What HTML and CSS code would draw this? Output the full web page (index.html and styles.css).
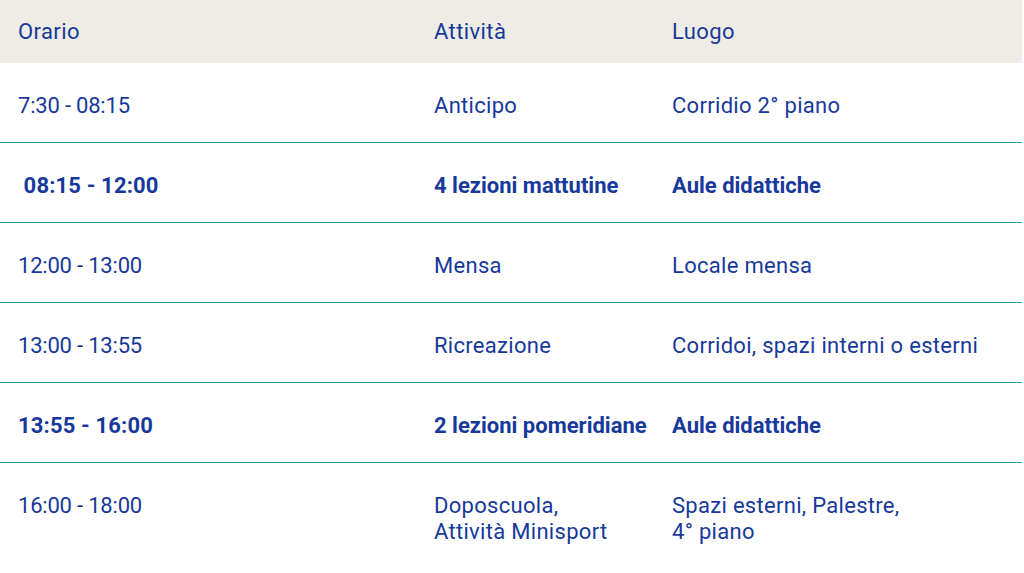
FILE: index.html
```html
<!DOCTYPE html>
<html lang="it">
<head>
<meta charset="utf-8">
<title>Orario</title>
<link rel="stylesheet" href="styles.css">
</head>
<body>
<table class="schedule">
  <colgroup>
    <col class="c-time">
    <col class="c-act">
    <col class="c-place">
  </colgroup>
  <thead>
    <tr><th>Orario</th><th>Attività</th><th>Luogo</th></tr>
  </thead>
  <tbody>
    <tr><td class="time">7:30 - 08:15</td><td>Anticipo</td><td>Corridio 2° piano</td></tr>
    <tr class="strong"><td class="time">&nbsp;08:15 - 12:00</td><td>4 lezioni mattutine</td><td>Aule didattiche</td></tr>
    <tr><td class="time">12:00 - 13:00</td><td>Mensa</td><td>Locale mensa</td></tr>
    <tr><td class="time">13:00 - 13:55</td><td>Ricreazione</td><td>Corridoi, spazi interni o esterni</td></tr>
    <tr class="strong"><td class="time">13:55 - 16:00</td><td>2 lezioni pomeridiane</td><td>Aule didattiche</td></tr>
    <tr><td class="time">16:00 - 18:00</td><td>Doposcuola,<br>Attività Minisport</td><td>Spazi esterni, Palestre,<br>4° piano</td></tr>
  </tbody>
</table>
</body>
</html>
```
FILE: styles.css
```css
html, body {
  margin: 0;
  padding: 0;
  background: #ffffff;
}
body {
  font-family: Roboto, "Liberation Sans", sans-serif;
  font-size: 22px;
  line-height: 26px;
  color: #17399c;
}
.schedule {
  width: 1022px;
  border-collapse: collapse;
  table-layout: fixed;
}
.c-time { width: 416px; }
.c-act { width: 238px; }
.c-place { width: 368px; }
.schedule th {
  background: #efece5;
  font-weight: 400;
  text-align: left;
  letter-spacing: 0.4px;
  padding: 19px 0 18px 18px;
}
.schedule td {
  text-align: left;
  vertical-align: top;
  letter-spacing: 0.3px;
  padding: 30px 0 23px 18px;
}
.schedule td.time {
  letter-spacing: -0.2px;
}
.schedule tbody tr + tr td {
  border-top: 1px solid #22a3ae;
}
.schedule tr.strong td {
  font-weight: 700;
  letter-spacing: 0;
}
.schedule tr.strong td.time {
  letter-spacing: 0.15px;
}
```
